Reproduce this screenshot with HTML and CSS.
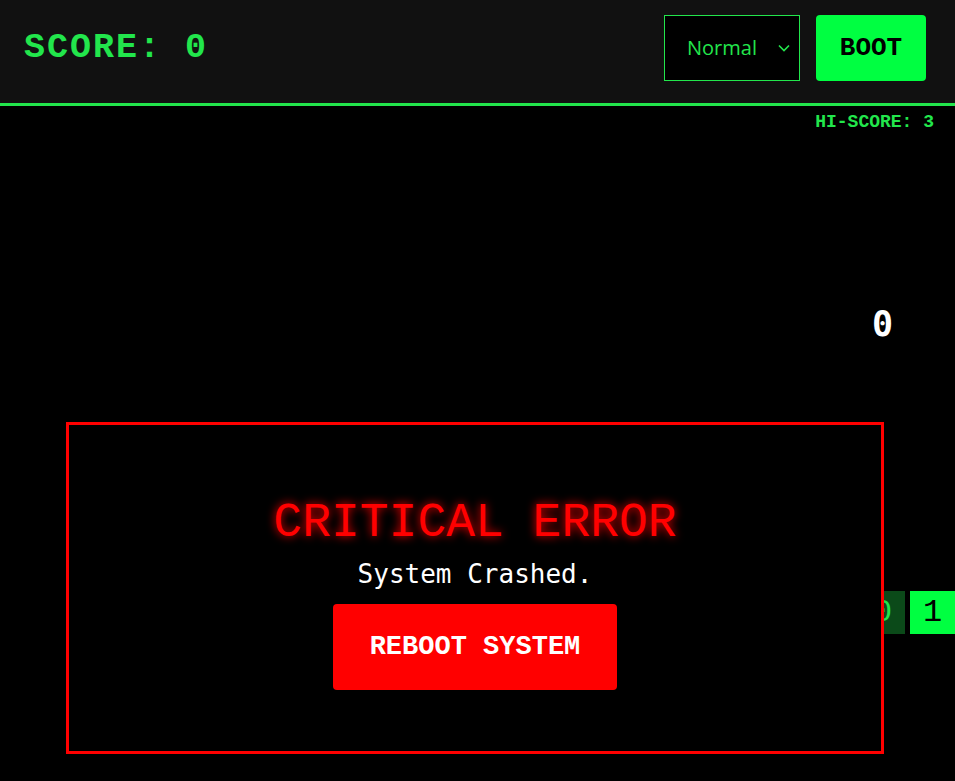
FILE: index.html
```html
<!DOCTYPE html>
<html lang="en">
<head>
<meta charset="utf-8">
<title>Binary Crash</title>
<link rel="stylesheet" href="styles.css">
</head>
<body>
<header class="topbar">
  <div class="score">SCORE: 0</div>
  <div class="controls">
    <div class="select-wrap">
      <select class="difficulty">
        <option>Normal</option>
        <option>Hard</option>
      </select>
      <svg class="chevron" width="12" height="8" viewBox="0 0 12 8"><path d="M1 1.5 L6 6.5 L11 1.5" fill="none" stroke="#22e64c" stroke-width="1.6"/></svg>
    </div>
    <button class="boot">BOOT</button>
  </div>
</header>
<main class="game">
  <div class="hiscore">HI-SCORE: 3</div>
  <div class="falling">0</div>
  <div class="bits">
    <div class="bit off">0</div>
    <div class="bit on">1</div>
  </div>
  <div class="modal">
    <h1 class="modal-title">CRITICAL ERROR</h1>
    <p class="modal-text">System Crashed.</p>
    <button class="reboot">REBOOT SYSTEM</button>
  </div>
</main>
</body>
</html>
```
FILE: styles.css
```css
html, body {
  margin: 0;
  padding: 0;
  background: #000;
  height: 100%;
  overflow: hidden;
}
body {
  font-family: "Courier New", "Nimbus Mono PS", "Nimbus Mono L", "FreeMono", Courier, "Liberation Mono", monospace;
}
.topbar {
  height: 103px;
  background: #111;
  border-bottom: 3px solid #22e64c;
  display: flex;
  align-items: center;
  justify-content: space-between;
  padding: 0 29px 0 24px;
}
.score {
  color: #22e64c;
  font-weight: bold;
  font-size: 35px;
  letter-spacing: 2px;
  margin-top: -8px;
}
.controls {
  display: flex;
  gap: 16px;
  align-items: center;
  margin-top: -8px;
}
.select-wrap {
  position: relative;
}
.difficulty {
  appearance: none;
  -webkit-appearance: none;
  width: 136px;
  height: 66px;
  background: #000;
  color: #22e64c;
  border: 1px solid #22e64c;
  border-radius: 0;
  font-family: "Open Sans", "Noto Sans", sans-serif;
  font-size: 20px;
  padding: 0 0 0 22px;
  outline: none;
}
.chevron {
  position: absolute;
  right: 10px;
  top: 29px;
  pointer-events: none;
}
.boot {
  width: 110px;
  height: 66px;
  background: #00ff41;
  border: none;
  border-radius: 4px;
  color: #000;
  font-family: inherit;
  font-weight: bold;
  font-size: 26px;
  padding: 0;
}
.game {
  position: relative;
  height: 675px;
  overflow: hidden;
}
.hiscore {
  position: absolute;
  top: 6px;
  right: 21px;
  color: #22e64c;
  font-weight: bold;
  font-size: 18px;
}
.falling {
  position: absolute;
  left: 872px;
  top: 198px;
  color: #fff;
  font-family: "DejaVu Sans Mono", monospace;
  font-weight: bold;
  font-size: 35px;
}
.bits {
  position: absolute;
  left: 860px;
  top: 485px;
  display: flex;
  gap: 5px;
}
.bit {
  width: 45px;
  height: 43px;
  display: flex;
  align-items: center;
  justify-content: center;
  font-size: 32px;
}
.bit.off {
  background: #0b4a19;
  color: #22e64c;
}
.bit.on {
  background: #00ff41;
  color: #000;
}
.modal {
  position: absolute;
  left: 66px;
  top: 316px;
  width: 812px;
  height: 317px;
  border: 3px solid #ff0000;
  background: #000;
  display: flex;
  flex-direction: column;
  align-items: center;
  justify-content: center;
  padding-top: 9px;
  box-sizing: content-box;
}
.modal-title {
  margin: 0 0 9px;
  color: #ff0000;
  font-family: inherit;
  font-weight: normal;
  font-size: 48px;
  text-shadow: 0 0 10px #ff0000;
}
.modal-text {
  margin: 0 0 15px;
  color: #fff;
  font-family: "DejaVu Sans Mono", monospace;
  font-size: 26px;
}
.reboot {
  background: #ff0000;
  color: #fff;
  border: none;
  border-radius: 4px;
  font-family: inherit;
  font-weight: bold;
  font-size: 27px;
  padding: 28px 37px;
}
```
